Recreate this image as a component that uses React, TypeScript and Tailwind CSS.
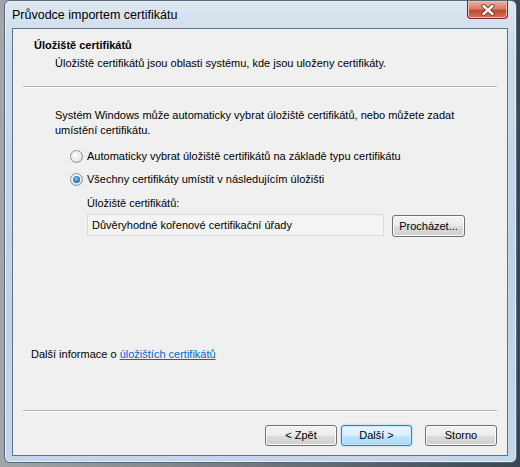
import type { ReactNode } from 'react'

const font = { fontFamily: '"Liberation Sans", Arial, sans-serif' }

function WinButton({
  children,
  isDefault = false,
  className = '',
}: {
  children: ReactNode
  isDefault?: boolean
  className?: string
}) {
  return (
    <button
      type="button"
      className={
        'flex items-center justify-center rounded-[3px] border text-[11px] leading-none text-black ' +
        (isDefault
          ? 'border-[#3c7fb1] bg-[linear-gradient(to_bottom,#eaf6fd_0%,#d9f0fc_50%,#bee6fd_51%,#a7d9f5_100%)] shadow-[inset_0_0_0_1px_#c5e8fb,0_0_2px_#7fc3ea] '
          : 'border-[#707070] bg-[linear-gradient(to_bottom,#f2f2f2_0%,#ebebeb_50%,#dddddd_51%,#cfcfcf_100%)] shadow-[inset_0_0_0_1px_#fcfcfc] ') +
        className
      }
    >
      {children}
    </button>
  )
}

function Radio({ checked }: { checked?: boolean }) {
  return (
    <span className="flex h-[13px] w-[13px] items-center justify-center rounded-full border border-[#8e8f8f] bg-[radial-gradient(circle_at_40%_40%,#ffffff_0%,#f0f0f0_40%,#d4d4d4_100%)]">
      {checked && (
        <span className="h-[7px] w-[7px] rounded-full bg-[radial-gradient(circle_at_45%_40%,#8cd0f8_0%,#2a7ac0_55%,#16477d_100%)]" />
      )}
    </span>
  )
}

export default function App() {
  return (
    <div
      className="flex h-[467px] w-[520px] overflow-hidden bg-[linear-gradient(to_right,#a3a6a8_0%,#7c8086_40%,#3a4651_100%)]"
      style={font}
    >
      <div className="w-[4px] shrink-0" />
      <div className="flex h-[463px] w-[513px] shrink-0 flex-col rounded-[6px] border border-[#56687a] bg-[linear-gradient(to_bottom,#dde7f1_0%,#cbdaea_10%,#bfd2e6_60%,#c4d7ea_100%)] shadow-[inset_0_0_0_1px_#e9f1f8]">
        {/* title bar */}
        <div className="flex h-[27px] items-start justify-between">
          <span className="pl-[7px] pt-[7px] text-[12.5px] leading-[15px] text-black">
            Průvodce importem certifikátu
          </span>
          <div className="mr-[8px] flex h-[18px] w-[41px] items-center justify-center rounded-b-[4px] border border-t-0 border-[#6b2a22] bg-[linear-gradient(to_bottom,#eab1a3_0%,#d8806b_45%,#c54a33_55%,#d56f55_100%)] shadow-[inset_0_0_0_1px_#f1c2b6]">
            <svg width="14" height="12" viewBox="0 0 14 12">
              <path
                d="M2.5 2 L11.5 10 M11.5 2 L2.5 10"
                stroke="#5a1d15"
                strokeWidth="4"
                strokeLinecap="round"
              />
              <path
                d="M2.5 2 L11.5 10 M11.5 2 L2.5 10"
                stroke="#ffffff"
                strokeWidth="2.6"
                strokeLinecap="round"
              />
            </svg>
          </div>
        </div>

        {/* client area */}
        <div className="ml-[7px] mr-[8px] flex h-[428px] flex-col border border-[#5d7386] bg-[#f0f0f0] text-[11px] leading-[15px] text-black">
          <div className="pl-[21px] pt-[9px] font-bold">Úložiště certifikátů</div>
          <div className="mt-[3px] pl-[42px]">
            Úložiště certifikátů jsou oblasti systému, kde jsou uloženy certifikáty.
          </div>
          <div className="mx-[10px] mt-[15px] border-b border-t border-b-white border-t-[#b0b0b0]" />

          <div className="mt-[20px] pl-[42px] pr-[30px]">
            Systém Windows může automaticky vybrat úložiště certifikátů, nebo můžete zadat
            <br />
            umístění certifikátu.
          </div>

          <div className="mt-[11px] flex h-[15px] items-center gap-[4px] pl-[57px]">
            <Radio />
            <span>Automaticky vybrat úložiště certifikátů na základě typu certifikátu</span>
          </div>
          <div className="mt-[8px] flex h-[15px] items-center gap-[4px] pl-[57px]">
            <Radio checked />
            <span>Všechny certifikáty umístit v následujícím úložišti</span>
          </div>

          <div className="mt-[9px] pl-[74px]">Úložiště certifikátů:</div>
          <div className="mt-[3px] flex items-start pl-[74px]">
            <div className="flex h-[22px] w-[297px] items-center border border-[#dadada] bg-[#f4f4f4] pl-[4px]">
              Důvěryhodné kořenové certifikační úřady
            </div>
            <WinButton className="ml-[8px] mt-[1px] h-[22px] w-[73px]">Procházet...</WinButton>
          </div>

          <div className="mt-[110px] pl-[18px]">
            Další informace o{' '}
            <a className="text-[#0066cc] underline" href="#">
              úložištích certifikátů
            </a>
          </div>

          <div className="mx-[10px] mt-[48px] border-b border-t border-b-white border-t-[#b0b0b0]" />

          <div className="mt-[13px] flex justify-end pr-[10px]">
            <WinButton className="h-[21px] w-[72px]">&lt; Zpět</WinButton>
            <WinButton isDefault className="ml-[4px] h-[21px] w-[71px]">
              Další &gt;
            </WinButton>
            <WinButton className="ml-[13px] h-[21px] w-[72px]">Storno</WinButton>
          </div>
        </div>
      </div>
      <div className="flex-1" />
    </div>
  )
}
